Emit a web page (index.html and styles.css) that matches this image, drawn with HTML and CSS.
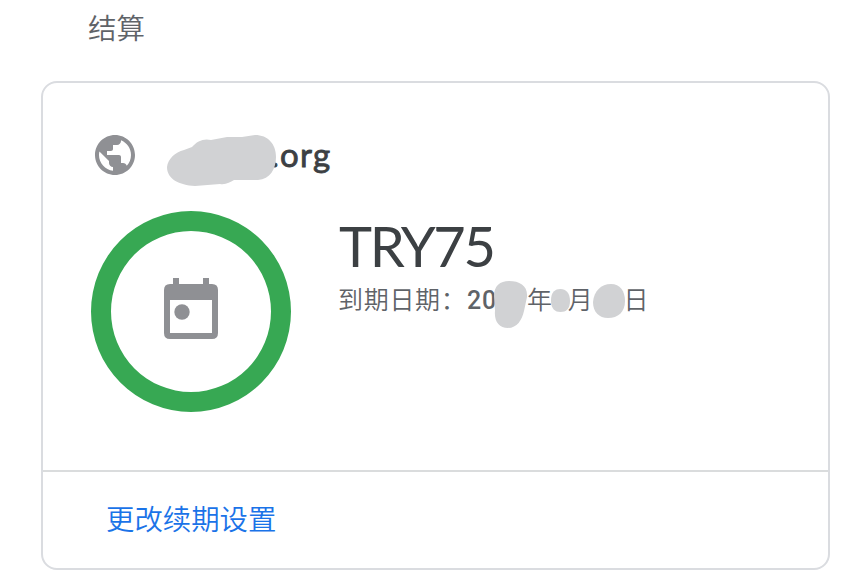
FILE: index.html
```html
<!DOCTYPE html>
<html lang="zh-CN">
<head>
<meta charset="utf-8">
<title>结算</title>
<link rel="stylesheet" href="styles.css">
</head>
<body>
<main class="page">
  <h2 class="title">结算</h2>
  <section class="card">
    <div class="content">
      <div class="domain-row">
        <svg class="globe" viewBox="0 0 24 24"><path d="M12 2C6.48 2 2 6.48 2 12s4.48 10 10 10 10-4.48 10-10S17.52 2 12 2zm-1 17.93c-3.95-.49-7-3.85-7-7.93 0-.62.08-1.21.21-1.79L9 15v1c0 1.1.9 2 2 2v1.93zm6.9-2.54c-.26-.81-1-1.39-1.9-1.39h-1v-3c0-.55-.45-1-1-1H8v-2h2c.55 0 1-.45 1-1V7h2c1.1 0 2-.9 2-2v-.41c2.93 1.19 5 4.06 5 7.41 0 2.08-.8 3.97-2.1 5.39z"/></svg>
        <span class="domain">.org</span>
        <svg class="blob domain-mask" viewBox="0 0 110 52"><path d="M0 32C1 24 8 17 17 15L25 12C30 6 37 3 44 5L60 2L75 2L88 0C101 0 109 9 109 22C109 34 103 44 91 45L67 45C63 47 59 50 53 49L28 51C12 50 0 44 0 32Z"/></svg>
      </div>
      <div class="status">
        <div class="ring">
          <svg class="calendar" viewBox="0 0 54 61"><path fill-rule="evenodd" d="M9 0h6v6h24V0h6v6h3q6 0 6 6v43q0 6-6 6H6q-6 0-6-6V12q0-6 6-6h3zM6 22v33h42V22z"/><circle cx="18" cy="34" r="7.7"/></svg>
        </div>
        <div class="details">
          <h1 class="name">TRY75</h1>
          <p class="expiry"><span class="label">到期日期：</span><span class="year">20</span><span>年</span><span class="month">月</span><span class="day">日</span>
            <svg class="blob date-mask" viewBox="0 0 134 48"><path d="M0 15C0 5 6 0 15 0C26 0 34 5 33 16L30 30C28 39 23 47 14 47C5 47 0 40 1 30Z"/><path d="M57 19.500C57 11 61 8 66.500 8S76 12 76 20S72 31 66.500 31S57 28 57 19.500Z"/><path d="M99 21C100 10 107 3 117 3C126 3 131 10 131 20C131 31 124 37 114 37C105 37 99 31 99 21Z"/></svg>
          </p>
        </div>
      </div>
    </div>
    <footer class="footer"><a class="link">更改续期设置</a></footer>
  </section>
</main>
</body>
</html>
```

FILE: styles.css
```css
* { box-sizing: border-box; }
body {
  margin: 0;
  background: #fff;
  color: #5f6368;
  font-family: Roboto, "Noto Sans CJK SC", sans-serif;
}
.page { height: 582px; padding: 0 30px 0 41px; overflow: hidden; }
.title {
  height: 81px;
  margin: 0;
  padding: 10px 0 0 47px;
  font-size: 28.500px;
  line-height: 40px;
  font-weight: 350;
}
.card {
  height: 489px;
  border: 2px solid #dadce0;
  border-radius: 16px;
  display: flex;
  flex-direction: column;
}
.content { height: 387px; padding: 48px; }
.domain-row {
  position: relative;
  height: 48px;
  display: flex;
  align-items: center;
}
.globe { width: 48px; height: 48px; fill: #8f9094; }
.domain {
  margin-left: 132px;
  padding-bottom: 2px;
  color: #3c4043;
  font: 400 33px/46px Lato, sans-serif;
  letter-spacing: 1.3px;
  -webkit-text-stroke: .8px #3c4043;
}
.blob { position: absolute; fill: #d1d2d4; }
.domain-mask { left: 76px; top: 4px; width: 110px; height: 52px; }
.status { display: flex; margin-top: 32px; }
.ring {
  width: 200px;
  height: 201px;
  border: 20px solid #37a853;
  border-radius: 50%;
  display: flex;
  justify-content: center;
  padding-top: 47px;
}
.calendar { width: 54px; height: 61px; fill: #8f9094; }
.details { margin-left: 47px; }
.name {
  height: 72px;
  margin: 0;
  padding-left: 1px;
  color: #3c4043;
  font: 400 56px/69px Lato, sans-serif;
  letter-spacing: -2.4px;
}
.expiry {
  position: relative;
  margin: 0;
  display: flex;
  width: 330px;
  font-size: 25px;
  line-height: 36px;
  font-weight: 350;
  letter-spacing: .7px;
  white-space: nowrap;
}
.label { width: 129px; }
.year { width: 60px; font-weight: 500; }
.month { margin-left: 15px; }
.day { margin-left: 30px; }
.date-mask { left: 156px; top: -2px; width: 134px; height: 48px; }
.footer {
  flex: 1;
  border-top: 2px solid #dadcdd;
  padding: 29px 63px 0;
}
.link { color: #1a73e8; font-size: 28.400px; line-height: 40px; font-weight: 350; }
```
